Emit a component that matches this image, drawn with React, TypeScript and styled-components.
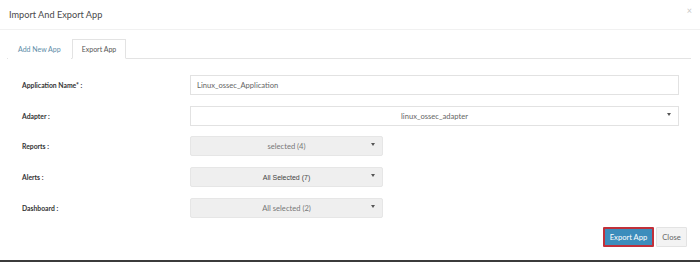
import styled, { createGlobalStyle } from 'styled-components';

const GlobalStyle = createGlobalStyle`
  html, body {
    margin: 0;
    padding: 0;
    background: #ffffff;
  }
  * {
    box-sizing: border-box;
  }
`;

const Modal = styled.div`
  width: 700px;
  height: 262px;
  display: flex;
  flex-direction: column;
  background: #fff;
  font-family: Lato, 'Open Sans', sans-serif;
  color: #333;
`;

const Header = styled.div`
  height: 30px;
  display: flex;
  align-items: center;
  justify-content: space-between;
  padding: 0 8px 0 9px;
  border-bottom: 1px solid #f1f1f1;
`;

const Title = styled.h4`
  margin: 0;
  font-size: 9.2px;
  font-weight: 400;
  color: #4a4a4a;
`;

const CloseX = styled.span`
  font-size: 9px;
  color: #c8c8c8;
  margin-top: -8px;
`;

const Body = styled.div`
  flex: 1;
  padding: 9px 9px 0 7px;
  display: flex;
  flex-direction: column;
`;

const Tabs = styled.ul`
  display: flex;
  gap: 1px;
  margin: 0;
  padding: 0 0 0 1px;
  list-style: none;
  height: 20px;
  border-bottom: 1px solid #e3e3e3;
`;

const Tab = styled.li<{ $active?: boolean }>`
  height: 20px;
  padding: 0 9px;
  display: flex;
  align-items: center;
  font-size: 7px;
  white-space: nowrap;
  color: ${(p) => (p.$active ? '#555' : '#5e8da8')};
  background: #fff;
  border: 1px solid ${(p) => (p.$active ? '#e3e3e3' : 'transparent')};
  border-bottom-color: ${(p) => (p.$active ? '#fff' : 'transparent')};
  margin-bottom: -1px;
`;

const Form = styled.div`
  display: flex;
  flex-direction: column;
  padding: 16px 0 0 15px;
  gap: 10.7px;
`;

const Row = styled.div`
  display: grid;
  grid-template-columns: 168px 489px;
  align-items: center;
  height: 20px;
`;

const Label = styled.label`
  font-size: 6.8px;
  font-weight: 700;
  color: #333;
`;

const TextInput = styled.div`
  height: 20px;
  border: 1px solid #e2e2e2;
  padding: 0 6px;
  display: flex;
  align-items: center;
  font-size: 7.6px;
  color: #666;
`;

const Select = styled.div`
  height: 20px;
  border: 1px solid #e2e2e2;
  position: relative;
  display: flex;
  align-items: center;
  justify-content: center;
  font-size: 7.6px;
  color: #666;
`;

const MultiButton = styled.div<{ $arial?: boolean }>`
  width: 193px;
  height: 20px;
  background: #efefef;
  border: 1px solid #e6e6e6;
  border-radius: 2px;
  position: relative;
  display: flex;
  align-items: center;
  justify-content: center;
  font-size: ${(p) => (p.$arial ? '7px' : '7.6px')};
  font-family: ${(p) => (p.$arial ? "'Liberation Sans', Arial, sans-serif" : 'inherit')};
  color: ${(p) => (p.$arial ? '#444' : '#777')};
`;

const Caret = styled.span`
  position: absolute;
  right: 7px;
  top: 50%;
  margin-top: -3px;
  width: 0;
  height: 0;
  border-left: 2.5px solid transparent;
  border-right: 2.5px solid transparent;
  border-top: 3px solid #555;
`;

const Footer = styled.div`
  display: flex;
  justify-content: flex-end;
  gap: 2px;
  margin-top: 9px;
  padding-right: 4px;
`;

const Button = styled.button<{ $primary?: boolean }>`
  height: 20px;
  padding: 0;
  font-family: inherit;
  font-size: 7.6px;
  white-space: nowrap;
  border-radius: 1px;
  background: ${(p) => (p.$primary ? '#3c8dbc' : '#f3f3f3')};
  color: ${(p) => (p.$primary ? '#fff' : '#666')};
  border: ${(p) => (p.$primary ? '2px solid #c0303a' : '1px solid #e3e3e3')};
  width: ${(p) => (p.$primary ? '51px' : '31px')};
`;

const BottomBar = styled.div`
  height: 2px;
  background: #3b3b3b;
`;

const multi = [
  { label: 'Reports :', value: 'selected (4)' },
  { label: 'Alerts :', value: 'All Selected (7)', arial: true },
  { label: 'Dashboard :', value: 'All selected (2)' },
];

function App() {
  return (
    <Modal>
      <GlobalStyle />
      <Header>
        <Title>Import And Export App</Title>
        <CloseX>×</CloseX>
      </Header>
      <Body>
        <Tabs>
          <Tab>Add New App</Tab>
          <Tab $active>Export App</Tab>
        </Tabs>
        <Form>
          <Row>
            <Label>Application Name* :</Label>
            <TextInput>Linux_ossec_Application</TextInput>
          </Row>
          <Row>
            <Label>Adapter :</Label>
            <Select>
              linux_ossec_adapter
              <Caret />
            </Select>
          </Row>
          {multi.map((m) => (
            <Row key={m.label}>
              <Label>{m.label}</Label>
              <MultiButton $arial={m.arial}>
                {m.value}
                <Caret />
              </MultiButton>
            </Row>
          ))}
        </Form>
        <Footer>
          <Button $primary>Export App</Button>
          <Button>Close</Button>
        </Footer>
      </Body>
      <BottomBar />
    </Modal>
  );
}

export default App;
